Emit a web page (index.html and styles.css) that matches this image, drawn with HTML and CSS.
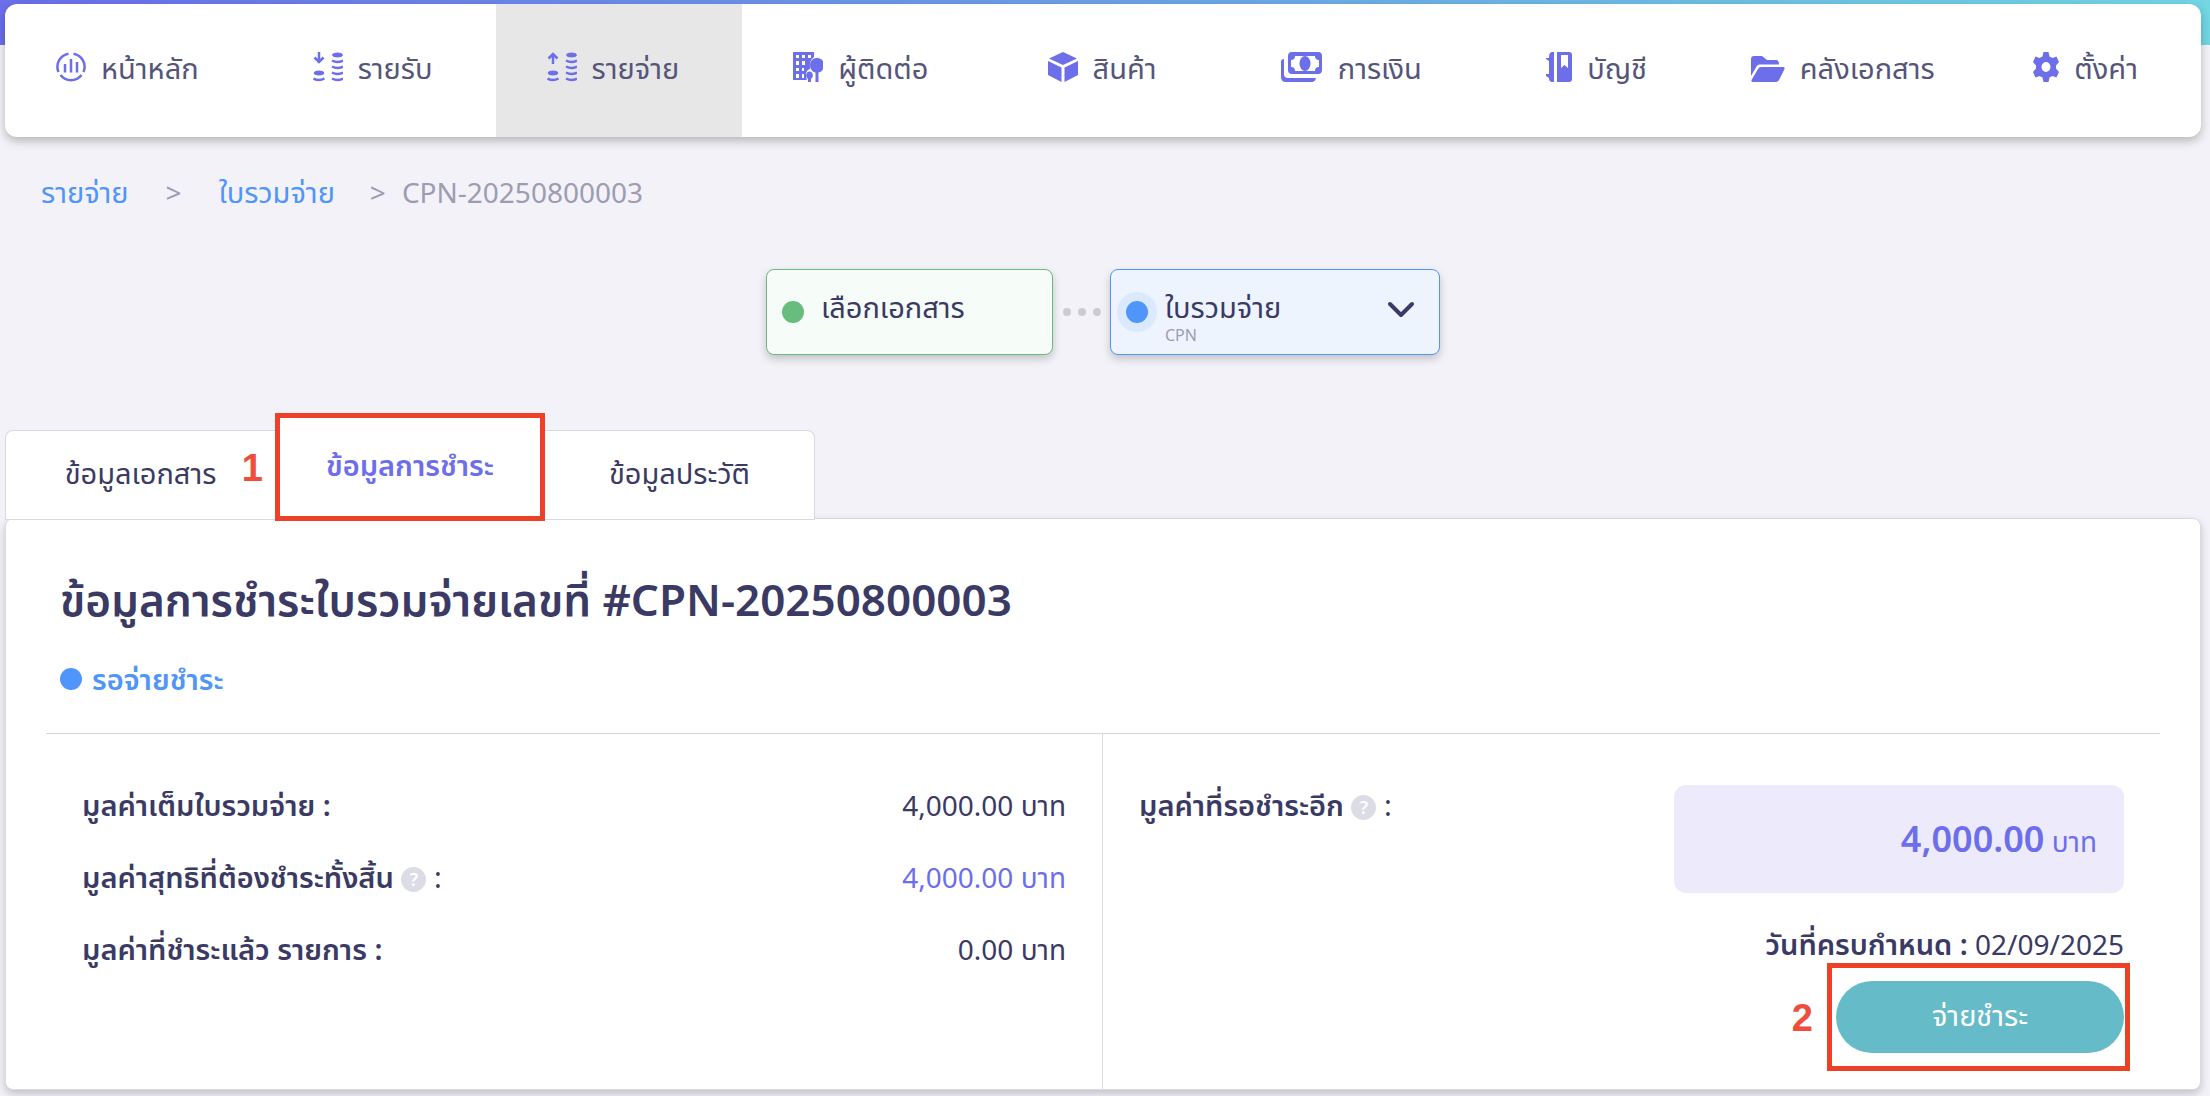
FILE: index.html
```
<!DOCTYPE html>
<html lang="th">
    <head>
        <meta charset="utf-8">
        <title>CPN-20250800003</title>
        <link rel="stylesheet" href="styles.css">
    </head>

    <body>
        <header class="topbar">
            <nav class="menu">
                <a class="menu-item" href="#">
                    <svg class="icon" width="30" height="30" viewBox="0 0 30 30" fill="none" stroke="currentColor" stroke-width="2.500">
                        <path d="M12.500 1.800A13.200 13.200 0 0 0 2.500 20M17.500 1.800A13.200 13.200 0 0 1 27.500 20M4.500 23A13.200 13.200 0 0 0 25.500 23"/>
                        <path d="M9 12v8.500M15 7v13.500M21 10v10.500"/>
                    </svg>
                    หน้าหลัก
                </a>
                <a class="menu-item" href="#">
                    <svg class="icon" width="30" height="30" viewBox="0 0 30 30" fill="none" stroke="currentColor" stroke-width="2.500">
                        <path d="M6 0v9M1.500 5.500L6 10l4.500-4.500"/>
                        <ellipse cx="6" cy="21" rx="5" ry="2" fill="currentColor" stroke-width="1"/>
                        <ellipse cx="24.500" cy="3" rx="5" ry="2" fill="currentColor" stroke-width="1"/>
                        <path d="M.5 26.500q5.500 3 11 0M19 8.500q5.500 3 11 0M19 14.500q5.500 3 11 0M19 20.500q5.500 3 11 0M19 26.500q5.500 3 11 0"/>
                    </svg>
                    รายรับ
                </a>
                <a class="menu-item active" href="#">
                    <svg class="icon" width="30" height="30" viewBox="0 0 30 30" fill="none" stroke="currentColor" stroke-width="2.500">
                        <path d="M6 12V3M1.500 6.500L6 2l4.500 4.500"/>
                        <ellipse cx="6" cy="21" rx="5" ry="2" fill="currentColor" stroke-width="1"/>
                        <ellipse cx="24.500" cy="3" rx="5" ry="2" fill="currentColor" stroke-width="1"/>
                        <path d="M.5 26.500q5.500 3 11 0M19 8.500q5.500 3 11 0M19 14.500q5.500 3 11 0M19 20.500q5.500 3 11 0M19 26.500q5.500 3 11 0"/>
                    </svg>
                    รายจ่าย
                </a>
                <a class="menu-item" href="#">
                    <svg class="icon" width="30" height="30" viewBox="0 0 30 30" fill="currentColor">
                        <path fill-rule="evenodd" d="M0 0h21v5q-5 3-4 12-4 1-4 6 0 3 1 5H0zM3 3v3h3V3zm6 0v3h3V3zm6 0v3h3V3zM3 9v4h3V9zm6 0v4h3V9zM3 16v3h3v-3zm6 0v3h2v-3zM3 22v4h3v-4zm6 0v4h2v-4z"/>
                        <path d="M24 6a6 7 0 0 1 1.500 14.500V30h-3v-9.500A6 7 0 0 1 24 6zM16.500 19.500a3.500 4 0 0 1 1.500 7.500v3h-3v-3a3.500 4 0 0 1 1.500-7.500z"/>
                    </svg>
                    ผู้ติดต่อ
                </a>
                <a class="menu-item wide" href="#">
                    <svg class="icon" width="30" height="30" viewBox="0 0 30 30" fill="currentColor">
                        <path d="M15 0l14 6.500L15 13 1 6.500zM0 9l13.500 6.500V30L0 23zM30 9v14l-13.500 7V15.500z"/>
                    </svg>
                    สินค้า
                </a>
                <a class="menu-item wide" href="#">
                    <svg class="icon" width="42" height="30" viewBox="0 0 42 30" fill="currentColor">
                        <path fill-rule="evenodd" d="M11 0h26a4 4 0 0 1 4 4v14a4 4 0 0 1-4 4H11a4 4 0 0 1-4-4V4a4 4 0 0 1 4-4zM14 4q0 4-4 4v7q4 0 4 4h20q0-4 4-4V8q-4 0-4-4z"/>
                        <ellipse cx="24" cy="11.500" rx="5.500" ry="7.500"/>
                        <path d="M3 7v15q0 4 4 4h28q-1 4-4 4H5q-5 0-5-5V10q0-3 3-3z"/>
                    </svg>
                    การเงิน
                </a>
                <a class="menu-item wide" href="#">
                    <svg class="icon" width="26" height="30" viewBox="0 0 26 30" fill="currentColor">
                        <path d="M8 0v30H6q-3 0-3-4l-3-2v-2h3V9L0 7V6h3q0-6 3-6z"/>
                        <path fill-rule="evenodd" d="M11 0h12q3 0 3 3v24q0 3-3 3H11zM15 3v13l3.500-3 3.500 3V3z"/>
                    </svg>
                    บัญชี
                </a>
                <a class="menu-item narrow" href="#">
                    <svg class="icon" width="34" height="30" viewBox="0 0 34 30" fill="currentColor">
                        <path d="M3 4h8l5 4h9q3 0 3 4.500H9q-3 0-4 3L0 24V7q0-3 3-3z"/>
                        <path d="M10 15h22q2 0 1.500 2L28 28q-1 2-3 2H2q-2 0-1.500-2L7 17q1-2 3-2z"/>
                    </svg>
                    คลังเอกสาร
                </a>
                <a class="menu-item" href="#">
                    <svg class="icon" width="26" height="30" viewBox="0 0 26 30" fill="currentColor">
                        <path fill-rule="evenodd" d="M10.500 0h5l1 4.500 3 1.500 4-1.500L26 10l-3 3.500v3l3 3.500-2.500 5.500-4-1.500-3 1.500-1 4.500h-5l-1-4.500-3-1.500-4 1.500L0 20l3-3.500v-3L0 10l2.500-5.500 4 1.500 3-1.500zM13 10a4.500 5 0 1 0 0 10 4.500 5 0 1 0 0-10z"/>
                    </svg>
                    ตั้งค่า
                </a>
            </nav>
        </header>

        <nav class="breadcrumb">
            <a href="#">รายจ่าย</a>
            <span class="sep">&gt;</span>
            <a href="#">ใบรวมจ่าย</a>
            <span class="sep last">&gt;</span>
            <span>CPN-20250800003</span>
        </nav>

        <div class="steps">
            <div class="step done">
                <span class="dot"></span>
                <span class="step-name">เลือกเอกสาร</span>
            </div>
            <div class="step-link"><i></i><i></i><i></i></div>
            <button class="step current" type="button">
                <span class="dot"></span>
                <span class="step-name">ใบรวมจ่าย<small>CPN</small></span>
                <svg class="chevron" width="28" height="18" viewBox="0 0 28 18" fill="none" stroke="currentColor" stroke-width="4" stroke-linecap="round" stroke-linejoin="round">
                    <path d="M3 3l11 11L25 3"/>
                </svg>
            </button>
        </div>

        <div class="tabs">
            <button class="tab" type="button">ข้อมูลเอกสาร</button>
            <button class="tab selected" type="button">ข้อมูลการชำระ<span class="mark mark-tab">1</span></button>
            <button class="tab" type="button">ข้อมูลประวัติ</button>
        </div>

        <main class="card">
            <h1>ข้อมูลการชำระใบรวมจ่ายเลขที่ #CPN-20250800003</h1>
            <p class="status"><span class="dot"></span>รอจ่ายชำระ</p>

            <div class="summary">
                <dl class="totals">
                    <div class="row">
                        <dt>มูลค่าเต็มใบรวมจ่าย :</dt>
                        <dd>4,000.00 บาท</dd>
                    </div>
                    <div class="row">
                        <dt>มูลค่าสุทธิที่ต้องชำระทั้งสิ้น <span class="help">?</span> <span class="colon">:</span></dt>
                        <dd class="net">4,000.00 บาท</dd>
                    </div>
                    <div class="row">
                        <dt>มูลค่าที่ชำระแล้ว รายการ :</dt>
                        <dd>0.00 บาท</dd>
                    </div>
                </dl>

                <section class="due">
                    <div class="due-row">
                        <h2>มูลค่าที่รอชำระอีก <span class="help">?</span> <span class="colon">:</span></h2>
                        <p class="amount"><b>4,000.00</b> บาท</p>
                    </div>
                    <p class="due-date"><b>วันที่ครบกำหนด :</b> 02/09/2025</p>
                    <div class="pay-wrap">
                        <button class="pay" type="button">จ่ายชำระ</button>
                        <span class="mark mark-pay">2</span>
                    </div>
                </section>
            </div>
        </main>
    </body>
</html>
```

FILE: styles.css
```
* {
    box-sizing: border-box;
}
body {
    margin: 0;
    padding: 4px 9px 7px 5px;
    background: #f3f2f8 linear-gradient(90deg, #6b6fea, #6ba6e6 55%, #72d6e3) no-repeat 0 0 / 100% 45px;
    color: #3a3a64;
    font: 29px/40px "Noto Sans", "Noto Sans Thai", sans-serif;
}
h1, h2, p, dl, dd {
    margin: 0;
}
button {
    font: inherit;
    color: inherit;
}
a {
    color: #4f95fa;
    text-decoration: none;
}

.menu {
    display: flex;
    height: 133px;
    background: #fff;
    border-radius: 12px;
    box-shadow: 0 4px 10px rgba(0, 0, 0, .25);
}
.menu-item {
    flex: 10 1 auto;
    display: flex;
    justify-content: center;
    padding-top: 44px;
    padding-right: 12px;
    gap: 15px;
    color: #55557a;
}
.menu-item.active {
    background: #e7e7e7;
}
.menu-item.wide {
    flex-grow: 11;
}
.menu-item.narrow {
    flex-grow: 7;
}
.icon {
    flex: none;
    margin-top: 4px;
    color: #6c6eea;
}

.breadcrumb {
    display: flex;
    padding: 35px 36px 0;
    color: #9d9cb2;
}
.breadcrumb span {
    font-size: 28px;
}
.sep {
    margin: 0 37px;
}
.sep.last {
    margin: 0 16px 0 35px;
}

.steps {
    display: flex;
    justify-content: center;
    align-items: center;
    margin-top: 57px;
}
.step {
    display: flex;
    align-items: center;
    width: 287px;
    height: 86px;
    padding: 0 15px;
    border: 1px solid #68bc7e;
    border-radius: 8px;
    background: #f6fcf8;
    box-shadow: 0 4px 8px rgba(0, 0, 0, .2);
    text-align: left;
}
.dot {
    flex: none;
    width: 22px;
    height: 22px;
    border-radius: 50%;
    background: #5096fa;
}
.done .dot {
    background: #68bc7e;
}
.step-name {
    flex: 1;
    padding: 0 0 10px 17px;
}
.step-link {
    display: flex;
    justify-content: center;
    gap: 7px;
    width: 57px;
}
.step-link i {
    width: 8px;
    height: 8px;
    border-radius: 50%;
    background: #ccc;
}
.step.current {
    width: 330px;
    border-color: #5096ee;
    background: #edf4fe;
}
.current .dot {
    box-shadow: 0 0 0 9px #dbe9fd;
}
.current .step-name {
    padding: 6px 0 0 17px;
}
.step-name small {
    display: block;
    color: #9d9cb2;
    font-size: 16px;
    line-height: 16px;
}
.chevron {
    margin: 0 9px 5px 0;
}

.tabs {
    position: relative;
    z-index: 1;
    display: grid;
    grid-template-columns: repeat(3, minmax(0, 1fr));
    align-items: end;
    width: 810px;
    margin-top: 58px;
}
.tab {
    height: 90px;
    padding: 0 0 4px;
    border: 1px solid #d9d9e5;
    border-width: 1px 0;
    background: #fff;
}
.tab:first-child {
    border-left-width: 1px;
    border-top-left-radius: 8px;
}
.tab:last-child {
    border-right-width: 1px;
    border-top-right-radius: 8px;
}
.tab.selected {
    position: relative;
    height: 108px;
    margin-bottom: -1px;
    border: 5px solid #ec4127;
    color: #6c6eea;
    font-weight: 600;
}
.mark {
    position: absolute;
    color: #ee4e3b;
    font: bold 38px/40px "Liberation Sans", sans-serif;
}
.mark-tab {
    top: 30px;
    right: 100%;
    margin-right: 17px;
}

.card {
    margin-top: -2px;
    padding: 53px 40px 0;
    border: 1px solid #d9d9e5;
    border-radius: 8px;
    background: #fff;
    box-shadow: 0 4px 8px rgba(0, 0, 0, .2);
}
h1 {
    padding-left: 14px;
    font-size: 44px;
    font-weight: 600;
    line-height: 54px;
}
.status {
    display: flex;
    align-items: center;
    padding: 33px 14px 34px;
    gap: 10px;
    color: #4f95fa;
    font-weight: 600;
}
.summary {
    display: grid;
    grid-template-columns: 1fr 1fr;
    border-top: 1px solid #d4d4dc;
}
.totals {
    display: grid;
    align-content: start;
    padding: 51px 36px;
    gap: 32px;
    border-right: 1px solid #dcdce4;
}
.row {
    display: flex;
    justify-content: space-between;
}
dt, h2 {
    font-size: 29px;
    font-weight: 600;
    line-height: 40px;
}
dd, .due-date {
    font-size: 28px;
}
.net {
    color: #6c6eea;
}
.help {
    display: inline-block;
    width: 25px;
    height: 25px;
    border-radius: 50%;
    background: #dcdce6;
    color: #fff;
    font-size: 18px;
    line-height: 25px;
    text-align: center;
    vertical-align: 2px;
}
.colon {
    font-weight: normal;
}
.due {
    padding: 51px 36px 18px;
    text-align: right;
}
.due-row {
    display: flex;
    justify-content: space-between;
}
.amount {
    width: 450px;
    height: 108px;
    padding: 34px 27px;
    border-radius: 12px;
    background: #edebfb;
    color: #6c6eea;
    font-size: 28px;
}
b {
    font-size: 29px;
    font-weight: 600;
}
.amount b {
    font-size: 36px;
}
.due-date {
    margin-top: 31px;
}
.pay-wrap {
    position: relative;
    width: 303px;
    margin: -1px -6px 0 auto;
    padding: 13px 1px 13px 4px;
    border: 5px solid #ec4127;
}
.pay {
    display: block;
    width: 100%;
    height: 72px;
    padding: 0 0 4px;
    border: 0;
    border-radius: 36px;
    background: #66bbc9;
    color: #fff;
}
.mark-pay {
    top: 30px;
    right: 100%;
    margin-right: 19px;
}
```
